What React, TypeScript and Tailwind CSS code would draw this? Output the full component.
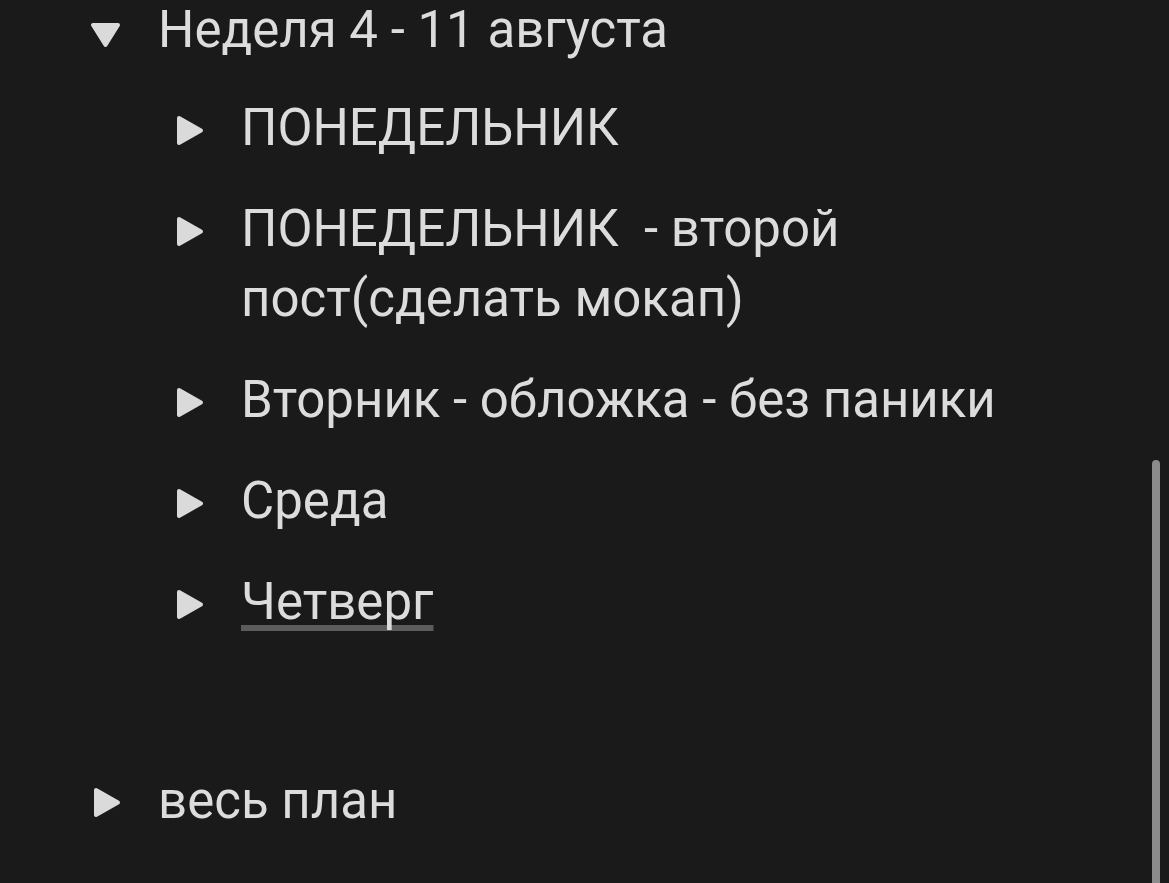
import React from "react";

const Caret = ({ open = false, top }: { open?: boolean; top: string }) => (
  <div className="w-[70px] shrink-0">
    <div className={`flex w-[33px] justify-end ${top}`}>
      {open ? (
        <svg width="31" height="26" viewBox="0 0 31 26">
          <polygon points="3,3 28,3 15.5,23" fill="#dadada" stroke="#dadada" strokeWidth="4" strokeLinejoin="round" />
        </svg>
      ) : (
        <svg width="28" height="31" viewBox="0 0 28 31">
          <polygon points="3,3 25,15.5 3,28" fill="#dadada" stroke="#dadada" strokeWidth="4" strokeLinejoin="round" />
        </svg>
      )}
    </div>
  </div>
);

const Row = ({
  children,
  open = false,
  top = "pt-[22px]",
}: {
  children: React.ReactNode;
  open?: boolean;
  top?: string;
}) => (
  <div className="flex items-start">
    <Caret open={open} top={top} />
    <div className="min-w-0 flex-1">{children}</div>
  </div>
);

export default function App() {
  const days = [
    "ПОНЕДЕЛЬНИК",
    "ПОНЕДЕЛЬНИК  - второй пост(сделать мокап)",
    "Вторник - обложка - без паники",
    "Среда",
  ];

  return (
    <div
      className="relative h-[883px] w-[1169px] overflow-hidden bg-[#1a1a1a] text-[51px] leading-[70px] text-[#dcdcdc]"
      style={{ fontFamily: "Roboto, 'Noto Sans', sans-serif" }}
    >
      <div className="-mt-[5px] flex w-[1012px] flex-col pl-[88px]">
        <Row open top="pt-[27px]">
          Неделя 4 - 11 августа
        </Row>

        <div className="mt-[28px] flex flex-col gap-[31px] pl-[83px]">
          {days.map((d) => (
            <Row key={d}>
              <span className="whitespace-pre-wrap">{d}</span>
            </Row>
          ))}
          <Row>
            <span className="underline decoration-[#5c5c5c] decoration-[6px] underline-offset-[6px] [text-decoration-skip-ink:none]">
              Четверг
            </span>
          </Row>
        </div>

        <div className="mt-[129px]">
          <Row top="pt-[21px]">весь план</Row>
        </div>
      </div>

      {/* scrollbar thumb */}
      <div className="absolute right-[9px] top-[460px] h-[440px] w-[8px] rounded-full bg-[#8c8c8c]" />
    </div>
  );
}
